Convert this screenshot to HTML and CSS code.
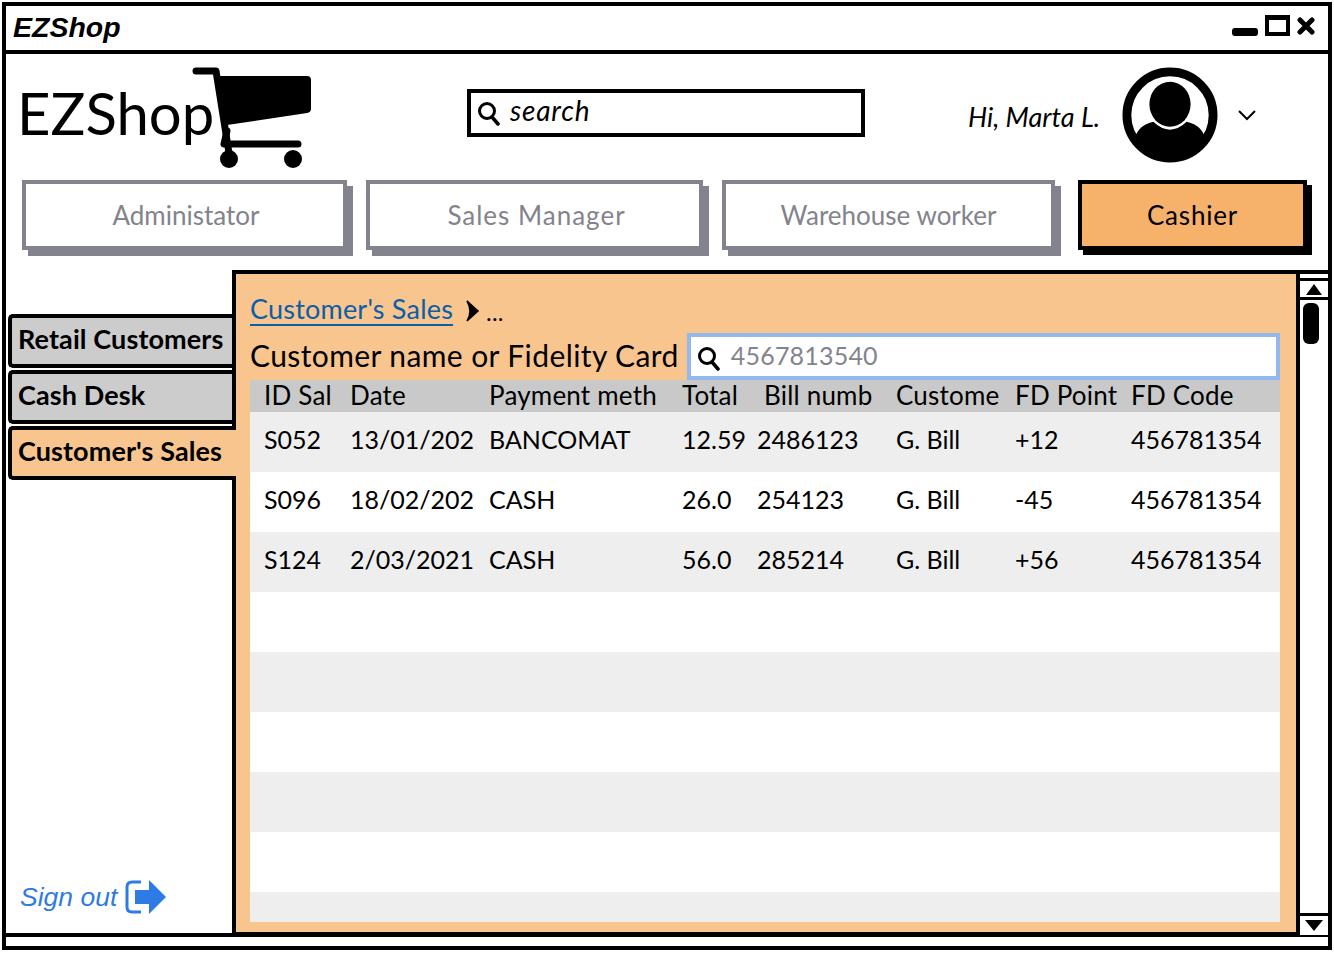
FILE: index.html
```html
<!DOCTYPE html>
<html>
<head>
    <title>EZShop</title>
    <link rel="stylesheet" href="styles.css">
</head>
<body>
    <div class="window">
        <div class="titlebar">
            <span class="app-title">EZShop</span>
            <div class="win-controls">
                <span class="win-min"></span>
                <span class="win-max"></span>
                <svg class="win-close" width="18" height="18" viewBox="0 0 18 18"><path d="M3 3L15 15M15 3L3 15" stroke="#000" stroke-width="5" stroke-linecap="round"/></svg>
            </div>
        </div>

        <div class="header">
            <div class="logo">
                <span class="logo-text">EZShop</span>
                <svg class="cart" width="120" height="104" viewBox="0 0 120 104">
                    <path d="M4 6H24L37 88" fill="none" stroke="#000" stroke-width="7" stroke-linecap="round" stroke-linejoin="round"/>
                    <path d="M27 11H115Q119 11 119 15V44Q119 47 115 48L35 60Z" fill="#000"/>
                    <path d="M35 66L32 79H106" fill="none" stroke="#000" stroke-width="7" stroke-linecap="round" stroke-linejoin="round"/>
                    <ellipse cx="37" cy="94" rx="9" ry="9" fill="#000"/>
                    <ellipse cx="101" cy="94" rx="9" ry="9" fill="#000"/>
                </svg>
            </div>
            <div class="search">
                <svg width="26" height="26" viewBox="0 0 26 26"><circle cx="11" cy="11" r="7.5" fill="none" stroke="#000" stroke-width="3"/><path d="M16 17L22 24" stroke="#000" stroke-width="3.5" stroke-linecap="round"/></svg>
                <span class="search-text">search</span>
            </div>
            <div class="user">
                <span class="greeting">Hi, Marta L.</span>
                <svg class="avatar" width="96" height="96" viewBox="0 0 98 98">
                    <defs><clipPath id="face"><circle cx="49" cy="49" r="43"/></clipPath></defs>
                    <circle cx="49" cy="49" r="44" fill="#fff" stroke="#000" stroke-width="9"/>
                    <g clip-path="url(#face)">
                        <path d="M12 98V78Q14 60 32 56Q49 72 66 56Q84 60 86 78V98Z" fill="#000"/>
                    </g>
                    <ellipse cx="49" cy="38" rx="21" ry="23" fill="#000"/>
                </svg>
                <svg class="chevron" width="20" height="14" viewBox="0 0 20 14"><path d="M2 3L10 11L18 3" fill="none" stroke="#000" stroke-width="2"/></svg>
            </div>
        </div>

        <div class="roles">
            <button class="role role-admin">Administator</button>
            <button class="role role-sales">Sales Manager</button>
            <button class="role role-ware">Warehouse worker</button>
            <button class="role role-cashier">Cashier</button>
        </div>

        <div class="main">
            <div class="sidebar">
                <div class="tab tab-first">Retail Customers</div>
                <div class="tab">Cash Desk</div>
                <div class="tab tab-active">Customer's Sales</div>
                <div class="signout">
                    <span>Sign out</span>
                    <svg width="44" height="36" viewBox="0 0 44 36">
                        <path d="M17 3H8Q3 3 3 8V28Q3 33 8 33H17" fill="none" stroke="#2f7be5" stroke-width="3"/>
                        <path d="M11 11H25V1L42 18L25 35V25H11Z" fill="#2f7be5"/>
                    </svg>
                </div>
            </div>

            <div class="panel">
                <div class="crumbs">
                    <a class="crumb-link" href="#">Customer's Sales</a>
                    <svg width="15" height="22" viewBox="0 0 15 22"><path d="M2 1L13 11L2 21Q8 11 2 1Z" fill="#000" stroke="#000" stroke-width="1.5"/></svg>
                    <span class="crumb-more">...</span>
                </div>
                <div class="filter">
                    <span class="filter-label">Customer name or Fidelity Card</span>
                    <div class="filter-input">
                        <svg width="26" height="26" viewBox="0 0 26 26"><circle cx="11" cy="11" r="7.5" fill="none" stroke="#000" stroke-width="3"/><path d="M16 17L22 24" stroke="#000" stroke-width="3.5" stroke-linecap="round"/></svg>
                        <span class="filter-value">4567813540</span>
                    </div>
                </div>
                <div class="table-wrap">
                    <table class="sales">
                        <colgroup>
                            <col class="c-id"><col class="c-date"><col class="c-pay"><col class="c-total">
                            <col class="c-bill"><col class="c-cust"><col class="c-point"><col class="c-code">
                        </colgroup>
                        <tr>
                            <th>ID Sal</th><th>Date</th><th>Payment meth</th><th>Total</th>
                            <th class="th-bill">Bill numb</th><th>Custome</th><th>FD Point</th><th>FD Code</th>
                        </tr>
                        <tr>
                            <td>S052</td><td>13/01/202</td><td>BANCOMAT</td><td>12.59</td>
                            <td>2486123</td><td>G. Bill</td><td>+12</td><td>456781354</td>
                        </tr>
                        <tr>
                            <td>S096</td><td>18/02/202</td><td>CASH</td><td>26.0</td>
                            <td>254123</td><td>G. Bill</td><td>-45</td><td>456781354</td>
                        </tr>
                        <tr>
                            <td>S124</td><td>2/03/2021</td><td>CASH</td><td>56.0</td>
                            <td>285214</td><td>G. Bill</td><td>+56</td><td>456781354</td>
                        </tr>
                        <tr><td colspan="8"></td></tr>
                        <tr><td colspan="8"></td></tr>
                        <tr><td colspan="8"></td></tr>
                        <tr><td colspan="8"></td></tr>
                        <tr><td colspan="8"></td></tr>
                        <tr><td colspan="8"></td></tr>
                    </table>
                </div>
            </div>

            <div class="scrollbar">
                <div class="scroll-btn scroll-up"><span class="tri-up"></span></div>
                <div class="scroll-track"><span class="scroll-thumb"></span></div>
                <div class="scroll-btn scroll-down"><span class="tri-down"></span></div>
            </div>
        </div>

        <div class="statusbar"></div>
    </div>
</body>
</html>
```

FILE: styles.css
```css
html, body {
    margin: 0;
    padding: 0;
    background: #fff;
}

body {
    font-family: "Lato", "Noto Sans", sans-serif;
    color: #000;
}

.window {
    box-sizing: border-box;
    width: 1330px;
    height: 948px;
    margin: 2px;
    border: 4px solid #000;
    display: flex;
    flex-direction: column;
    overflow: hidden;
}

/* title bar */
.titlebar {
    height: 44px;
    border-bottom: 4px solid #000;
    display: flex;
    align-items: center;
    justify-content: space-between;
    padding: 0 13px 0 7px;
    flex: none;
}

.app-title {
    font-family: "Liberation Sans", Arial, sans-serif;
    font-style: italic;
    font-weight: bold;
    font-size: 28.5px;
    margin-top: -2px;
}

.win-controls {
    display: flex;
    align-items: flex-end;
    gap: 7px;
    margin-top: -5px;
}

.win-min {
    width: 26px;
    height: 8px;
    border-radius: 3px;
    background: #000;
}

.win-max {
    box-sizing: border-box;
    width: 25px;
    height: 21px;
    border: 4px solid #000;
    border-top-width: 5px;
}

.win-close {
    margin-bottom: 1px;
}

/* header */
.header {
    height: 126px;
    flex: none;
    display: flex;
    align-items: flex-start;
    padding-left: 11px;
}

.logo {
    width: 292px;
    display: flex;
    align-items: flex-start;
    padding-top: 11px;
}

.logo-text {
    font-size: 58px;
    line-height: 64px;
    margin-top: 16px;
    width: 175px;
    white-space: nowrap;
}

.cart {
    flex: none;
}

.search {
    box-sizing: border-box;
    width: 398px;
    height: 48px;
    margin: 35px 0 0 158px;
    border: 4px solid #000;
    display: flex;
    align-items: center;
    gap: 8px;
    padding-left: 5px;
}

.search-text {
    font-style: italic;
    font-size: 28px;
    letter-spacing: .8px;
    margin-top: -7px;
}

.user {
    display: flex;
    align-items: center;
    margin-left: 103px;
    padding-top: 13px;
}

.greeting {
    font-style: italic;
    font-size: 27px;
    margin-top: 3px;
    width: 154px;
    white-space: nowrap;
}

.avatar {
    flex: none;
}

.chevron {
    margin-left: 19px;
}

/* role buttons */
.roles {
    height: 78px;
    flex: none;
    display: flex;
    align-items: flex-start;
    padding-left: 16px;
}

.role {
    box-sizing: border-box;
    height: 70px;
    background: #fff;
    border: 4px solid #83838d;
    box-shadow: 6px 6px 0 #83838d;
    color: #83838d;
    font-family: inherit;
    font-size: 26px;
    padding: 0;
}

.role-admin {
    width: 325px;
    margin-right: 19px;
    padding-left: 3px;
}

.role-sales {
    width: 337px;
    margin-right: 19px;
    padding-left: 4px;
    letter-spacing: 1px;
}

.role-ware {
    width: 333px;
    margin-right: 23px;
}

.role-cashier {
    width: 229px;
    background: #f6b26b;
    border-color: #000;
    box-shadow: 5px 5px 0 #000;
    color: #000;
    letter-spacing: .8px;
}

/* main area */
.main {
    flex: 1;
    min-height: 0;
    margin-top: 12px;
    display: flex;
}

.sidebar {
    width: 226px;
    flex: none;
    display: flex;
    flex-direction: column;
    padding-top: 44px;
    box-sizing: border-box;
    border-bottom: 4px solid #000;
}

.tab {
    box-sizing: border-box;
    height: 54px;
    margin: 0 0 2px 2px;
    padding: 0 0 6px 6px;
    background: #ccc;
    border: 4px solid #000;
    border-right: 0;
    border-radius: 5px 0 0 5px;
    display: flex;
    align-items: center;
    font-size: 27px;
    font-weight: bold;
    letter-spacing: .1px;
    white-space: nowrap;
}

.tab-active {
    background: #f8c58f;
    margin-right: -4px;
    position: relative;
}

.signout {
    margin-top: auto;
    display: flex;
    align-items: center;
    gap: 7px;
    padding: 0 0 18px 14px;
    color: #2f7be5;
    font-family: "Liberation Sans", Arial, sans-serif;
    font-style: italic;
    font-size: 26.5px;
}

/* content panel */
.panel {
    width: 1068px;
    flex: none;
    box-sizing: border-box;
    background: #f8c58f;
    border: 4px solid #000;
    border-bottom-width: 5px;
    padding: 0 16px 10px 14px;
    display: flex;
    flex-direction: column;
}

.crumbs {
    height: 59px;
    flex: none;
    display: flex;
    align-items: flex-end;
    gap: 12px;
    padding-bottom: 7px;
    box-sizing: border-box;
    font-size: 27px;
    letter-spacing: .2px;
}

.crumb-link {
    color: #0b5ea8;
    text-decoration: underline;
    text-underline-offset: 5px;
    line-height: 34px;
}

.crumbs svg {
    margin-bottom: 4px;
}

.crumb-more {
    font-size: 24px;
    margin-left: -6px;
    line-height: 28px;
}

.filter {
    height: 47px;
    flex: none;
    display: flex;
    align-items: center;
    gap: 8px;
}

.filter-label {
    font-size: 30px;
    letter-spacing: .4px;
    white-space: nowrap;
    margin-top: -3px;
}

.filter-input {
    box-sizing: border-box;
    flex: 1;
    height: 47px;
    background: #fff;
    border: 4px solid #93b8ef;
    display: flex;
    align-items: center;
    gap: 7px;
    padding-left: 5px;
    color: #83838d;
}

.filter-input svg {
    margin-top: 3px;
}

.filter-value {
    font-size: 25px;
    letter-spacing: .2px;
    margin: -3px 0 0 2px;
}

.table-wrap {
    flex: 1;
    min-height: 0;
    overflow: hidden;
}

.sales {
    width: 100%;
    table-layout: fixed;
    border-collapse: collapse;
    font-size: 25px;
}

.c-id { width: 100px; }
.c-date { width: 139px; }
.c-pay { width: 193px; }
.c-total { width: 75px; }
.c-bill { width: 139px; }
.c-cust { width: 119px; }
.c-point { width: 116px; }
.c-code { width: 149px; }

.sales th,
.sales td {
    box-sizing: border-box;
    padding: 0;
    text-align: left;
    font-weight: normal;
    white-space: nowrap;
}

.sales th:first-child,
.sales td:first-child {
    padding-left: 14px;
}

.sales th {
    height: 32px;
    padding-bottom: 2px;
    background: #c9c9c9;
    font-size: 26px;
    line-height: 28px;
    letter-spacing: .2px;
}

.sales td {
    height: 60px;
    padding-bottom: 6px;
}

.sales .th-bill {
    padding-left: 7px;
}

.sales tr:nth-child(even) td {
    background: #eee;
}

.sales tr:nth-child(odd) td {
    background: #fff;
}

/* scrollbar */
.scrollbar {
    width: 28px;
    flex: none;
    box-sizing: border-box;
    padding-top: 4px;
    border-top: 4px solid #000;
    border-bottom: 2px solid #000;
    display: flex;
    flex-direction: column;
}

.scroll-btn {
    height: 22px;
    flex: none;
    box-sizing: border-box;
    display: flex;
    align-items: center;
    justify-content: center;
}

.scroll-up {
    border-top: 3px solid #000;
    border-bottom: 3px solid #000;
}

.scroll-down {
    border-top: 3px solid #000;
}

.tri-up {
    border: 8px solid transparent;
    border-top: 0;
    border-bottom: 11px solid #000;
}

.tri-down {
    border: 9px solid transparent;
    border-bottom: 0;
    border-top: 11px solid #000;
}

.scroll-track {
    flex: 1;
    padding: 3px 0 0 3px;
}

.scroll-thumb {
    display: block;
    width: 16px;
    height: 41px;
    background: #000;
    border-radius: 6px;
}

.statusbar {
    flex: none;
    height: 9px;
}
```
